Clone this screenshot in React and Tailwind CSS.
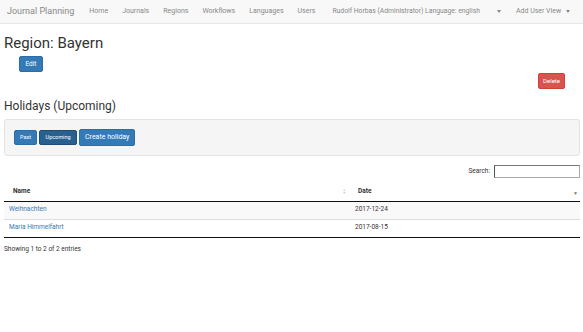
const navItems = ["Home", "Journals", "Regions", "Workflows", "Languages", "Users"];

const holidays = [
  { name: "Weihnachten", date: "2017-12-24" },
  { name: "Maria Himmelfahrt", date: "2017-08-15" },
];

const Caret = () => (
  <span className="inline-block w-0 h-0 border-x-[2.5px] border-x-transparent border-t-[3px] border-t-[#888]" />
);

export default function App() {
  return (
    <div className="w-[583px] h-[332px] bg-white text-[#333] font-['Roboto',sans-serif] overflow-hidden">
      {/* Navbar */}
      <nav className="h-[24px] bg-[#f8f8f8] border-b border-[#e7e7e7] flex items-center text-[#888]">
        <span className="pl-[7px] pr-[8px] text-[9px] leading-none">Journal Planning</span>
        <ul className="flex items-center text-[7px] leading-none">
          {navItems.map((n) => (
            <li key={n} className="px-[7px]">
              {n}
            </li>
          ))}
          <li className="pl-[10px] flex items-center gap-[17px] text-[6.8px]">
            <span>Rudolf Horbas (Administrator) Language: english</span>
            <Caret />
          </li>
          <li className="pl-[15px] flex items-center gap-[5px]">
            <span>Add User View</span>
            <Caret />
          </li>
        </ul>
      </nav>

      <div className="pl-[4px] pr-[3px]">
        <h1 className="text-[15px] leading-none mt-[12px]">Region: Bayern</h1>
        <button className="block ml-[15px] mt-[5px] h-[16px] w-[24px] rounded-[2px] bg-[#337ab7] border border-[#2e6da4] text-white text-[6.5px] leading-none">
          Edit
        </button>
        <div className="flex justify-end pr-[15px] mt-[1px]">
          <button className="block h-[16px] w-[27px] rounded-[2px] bg-[#d9534f] border border-[#d43f3a] text-white text-[6px] leading-none">
            Delete
          </button>
        </div>

        <h2 className="text-[12px] leading-none mt-[11px]">Holidays (Upcoming)</h2>
        <div className="mt-[7px] h-[37px] bg-[#f5f5f5] border border-[#e3e3e3] rounded-[3px] flex items-center pl-[9px] gap-[2px]">
          <button className="block h-[15px] px-[5px] rounded-[2px] bg-[#337ab7] border border-[#2e6da4] text-white text-[5.5px] leading-none">
            Past
          </button>
          <button className="block h-[15px] px-[5.5px] rounded-[2px] bg-[#286090] border border-[#204d74] text-white text-[5.5px] leading-none">
            Upcoming
          </button>
          <button className="block h-[17px] px-[5px] rounded-[2px] bg-[#337ab7] border border-[#2e6da4] text-white text-[7px] leading-none">
            Create holiday
          </button>
        </div>

        <div className="mt-[9px] flex justify-end items-center gap-[4px] text-[6.5px] leading-none">
          <span>Search:</span>
          <input className="block w-[86px] h-[13px] border border-[#aaa] border-l-[#555] border-t-[#777] bg-white" />
        </div>

        <table className="w-full mt-[5px] border-collapse text-[6.5px]">
          <thead>
            <tr className="h-[18px] border-b border-[#111]">
              <th className="w-[346px] text-left font-bold pl-[9px] relative">
                Name
                <span className="absolute right-[4px] top-1/2 -translate-y-1/2 text-[#ccc] text-[3.5px] leading-[3px] flex flex-col">
                  <span>▲</span>
                  <span>▼</span>
                </span>
              </th>
              <th className="text-left font-bold pl-[8px] relative">
                Date
                <span className="absolute right-[2px] top-1/2 -translate-y-[30%] text-[#777] text-[5px] leading-none">▼</span>
              </th>
            </tr>
          </thead>
          <tbody>
            {holidays.map((h, i) => (
              <tr
                key={h.name}
                className={`h-[18px] ${i === 0 ? "bg-[#f9f9f9] border-b border-[#ddd]" : "border-b border-[#111]"}`}
              >
                <td className="pl-[5px] text-[#337ab7]">{h.name}</td>
                <td className="pl-[5px]">{h.date}</td>
              </tr>
            ))}
          </tbody>
        </table>
        <p className="mt-[7px] text-[6.5px]">Showing 1 to 2 of 2 entries</p>
      </div>
    </div>
  );
}
